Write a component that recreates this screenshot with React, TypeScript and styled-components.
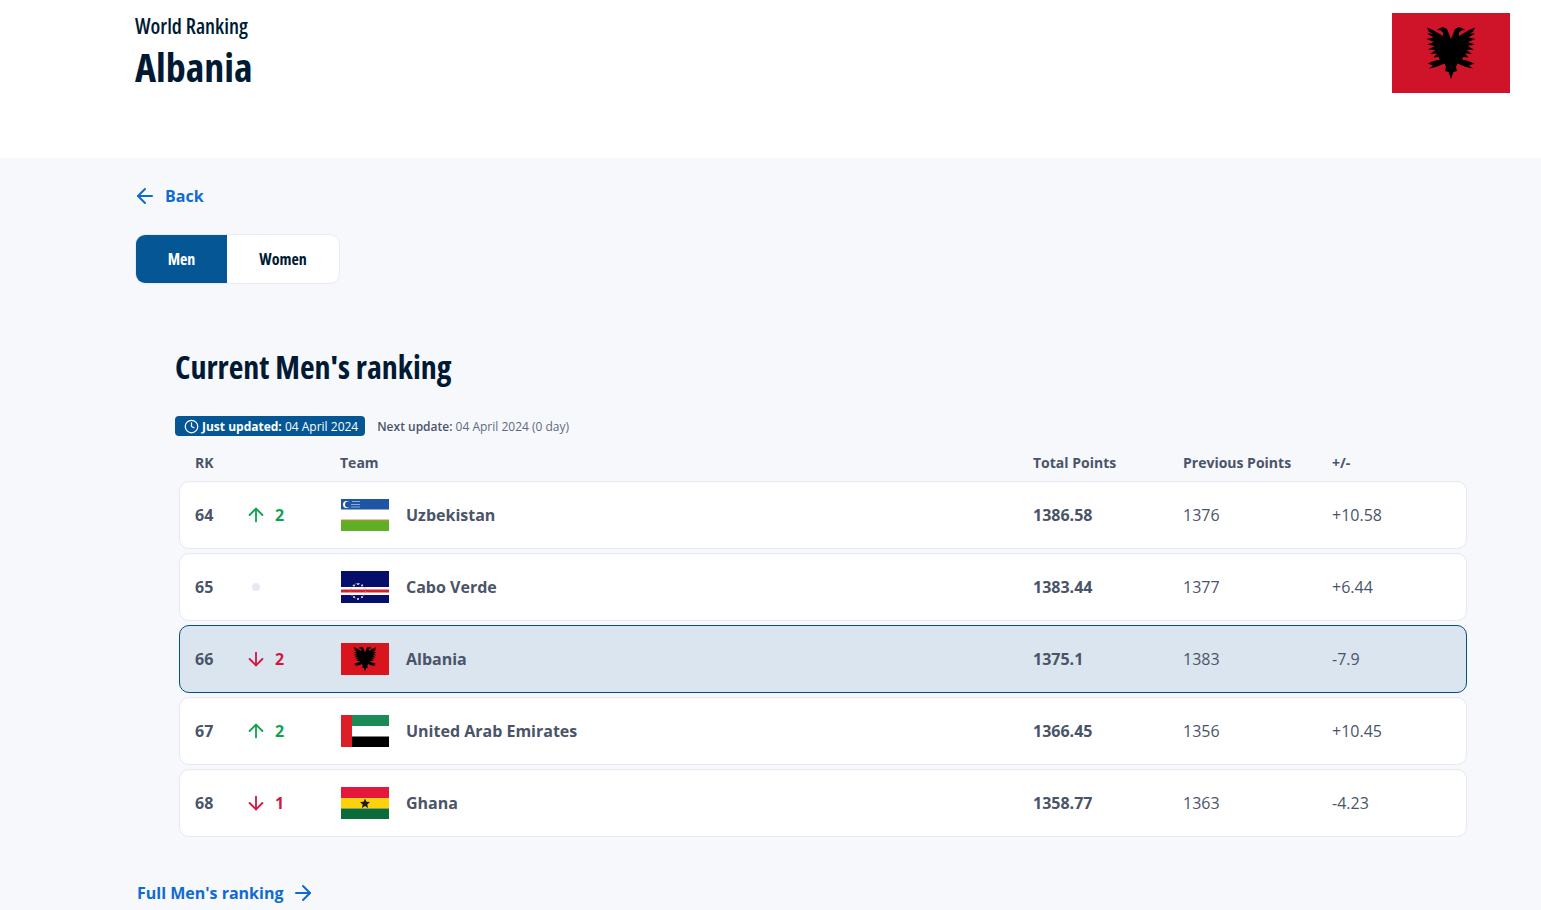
import React from "react";
import styled, { createGlobalStyle } from "styled-components";
import { ArrowDown, ArrowLeft, ArrowRight, ArrowUp, Clock } from "lucide-react";

const GlobalStyle = createGlobalStyle`
  html, body {
    margin: 0;
    padding: 0;
    background: #f7f8fc;
    font-family: "Open Sans", "Liberation Sans", sans-serif;
    overflow: hidden;
  }
`;

const Page = styled.div`
  width: 1541px;
  height: 910px;
  overflow: hidden;
`;

const Hero = styled.header`
  height: 158px;
  box-sizing: border-box;
  background: #fff;
  padding: 13px 31px 0 135px;
  display: flex;
  justify-content: space-between;
  align-items: flex-start;
`;

const HeroText = styled.div`
  display: flex;
  flex-direction: column;
  color: #001a33;
  font-stretch: 75%;
`;

const Eyebrow = styled.span`
  font-size: 21px;
  line-height: 27px;
  font-weight: 600;
`;

const CountryName = styled.h1`
  margin: 0;
  font-size: 40px;
  line-height: 54px;
  font-weight: 700;
`;

const HeroFlag = styled.svg`
  width: 118px;
  height: 80px;
  display: block;
`;

const Main = styled.main`
  padding: 27px 74px 0 135px;
`;

const TextLink = styled.a`
  display: inline-flex;
  align-items: center;
  gap: 8px;
  height: 22px;
  color: #0f6bcf;
  font-size: 16px;
  font-weight: 700;
`;

const BackIcon = styled(ArrowLeft)`
  margin-left: -2px;
`;

const Toggle = styled.div`
  display: flex;
  width: 205px;
  height: 50px;
  box-sizing: border-box;
  margin-top: 21px;
  background: #fff;
  border: 1px solid #e8ebf2;
  border-radius: 10px;
  overflow: hidden;
`;

const ToggleItem = styled.div<{ $active?: boolean }>`
  display: flex;
  align-items: center;
  justify-content: center;
  width: ${(p) => (p.$active ? "91px" : "112px")};
  background: ${(p) => (p.$active ? "#045694" : "transparent")};
  color: ${(p) => (p.$active ? "#fff" : "#001a33")};
  font-size: 16px;
  font-weight: 700;
  font-stretch: 75%;
`;

const Section = styled.section`
  padding-left: 40px;
  margin-top: 59px;
`;

const SectionTitle = styled.h2`
  margin: 0;
  color: #001a33;
  font-size: 32px;
  line-height: 48px;
  font-weight: 700;
  font-stretch: 75%;
`;

const UpdateLine = styled.div`
  display: flex;
  align-items: center;
  gap: 12px;
  margin-top: 25px;
  font-size: 12px;
  color: #5f6980;
`;

const UpdateBadge = styled.span`
  display: inline-flex;
  align-items: center;
  gap: 3px;
  height: 20px;
  padding: 0 7px 0 9px;
  border-radius: 4px;
  background: #045694;
  color: #fff;
  b {
    font-weight: 700;
  }
`;

const NextUpdate = styled.span`
  b {
    font-weight: 600;
    color: #4a5468;
  }
`;

const columns = "52px 93px 693px 150px 149px 1fr";

const HeadRow = styled.div`
  display: grid;
  grid-template-columns: ${columns};
  align-items: center;
  height: 26px;
  margin: 13px 0 6px 0;
  padding-left: 20px;
  color: #4a5468;
  font-size: 14px;
  font-weight: 700;
`;

const Rows = styled.div`
  display: flex;
  flex-direction: column;
  gap: 4px;
  margin-left: 4px;
`;

const Row = styled.div<{ $current?: boolean }>`
  display: grid;
  grid-template-columns: ${columns};
  align-items: center;
  height: 68px;
  box-sizing: border-box;
  padding-left: 15px;
  background: ${(p) => (p.$current ? "#dae5ef" : "#fff")};
  border: 1px solid ${(p) => (p.$current ? "#04507f" : "#e6e9f2")};
  border-radius: 10px;
  color: #4a5468;
  font-size: 16px;
`;

const Rank = styled.span`
  font-weight: 700;
`;

const Move = styled.span<{ $dir: "up" | "down" }>`
  display: flex;
  align-items: center;
  gap: 8px;
  color: ${(p) => (p.$dir === "up" ? "#0fa24f" : "#d5173f")};
  font-weight: 700;
  svg {
    margin-left: -2px;
  }
`;

const SameDot = styled.span`
  display: block;
  width: 8px;
  height: 8px;
  margin-left: 5px;
  border-radius: 50%;
  background: #e6e9f2;
`;

const Team = styled.span`
  display: flex;
  align-items: center;
  gap: 17px;
  padding-left: 1px;
  font-weight: 700;
`;

const RowFlag = styled.svg`
  width: 48px;
  height: 32px;
  display: block;
  flex-shrink: 0;
`;

const Total = styled.span`
  font-weight: 700;
`;

const Footer = styled.div`
  margin: 45px 0 0 2px;
`;

const eagleHalf =
  "M0 -14 L-2 -19 L-4 -24 L-8 -26 L-12 -24.5 L-14 -23 L-10 -22.5 L-8 -20 L-8 -17 L-13 -20 L-18 -23 L-24 -25.5 L-22 -21 L-18 -19.5 L-24 -19.5 L-17.5 -15.5 L-24.5 -14 L-17 -11 L-24 -8.5 L-16.5 -7 L-23 -3.5 L-15.5 -3 L-21 1 L-14 .5 L-17.5 4.5 L-12 4 L-11.5 7 L-16 7.5 L-23.5 10.5 L-18 12.5 L-22 15.5 L-15 14 L-10 12 L-6.5 10.5 L-5 14 L-6 18 L-2.5 19 L0 26 Z";

const Eagle = ({ cx, cy, s }: { cx: number; cy: number; s: number }) => (
  <g transform={`translate(${cx} ${cy}) scale(${s})`} fill="#000">
    <path d={eagleHalf} />
    <path d={eagleHalf} transform="scale(-1 1)" />
  </g>
);

const UzbekistanFlag = () => (
  <>
    <rect width="48" height="32" fill="#fff" />
    <rect width="48" height="10.5" fill="#1f55a5" />
    <rect y="21" width="48" height="11" fill="#5fae24" />
    <rect y="20.5" width="48" height="1" fill="#c88a4a" />
    <circle cx="5.5" cy="5.5" r="3.5" fill="#fff" />
    <circle cx="7" cy="5.5" r="3" fill="#1f55a5" />
    <path d="M11 2.5h8M10 5.5h9M10 8h9" stroke="#a9c1e2" strokeWidth="0.8" />
  </>
);

const CaboVerdeFlag = () => (
  <>
    <rect width="48" height="32" fill="#050f6b" />
    <rect y="16" width="48" height="8" fill="#fff" />
    <rect y="18.5" width="48" height="3" fill="#d6202c" />
    <circle cx="17" cy="20" r="7.5" fill="none" stroke="#e0a63c" strokeWidth="1" strokeDasharray="1.2 2.4" />
    {[[13, 14.5], [17, 13], [21, 14.5], [13, 26], [17, 28], [21, 26]].map(([x, y]) => (
      <circle key={`${x}-${y}`} cx={x} cy={y} r="1" fill="#d9dbe8" />
    ))}
  </>
);

const UaeFlag = () => (
  <>
    <rect width="48" height="11" fill="#1c8a57" />
    <rect y="11" width="48" height="10.5" fill="#fff" />
    <rect y="21.5" width="48" height="10.5" fill="#000" />
    <rect width="11" height="32" fill="#dc1f26" />
  </>
);

const GhanaFlag = () => (
  <>
    <rect width="48" height="11" fill="#e3183a" />
    <rect y="11" width="48" height="10.5" fill="#fcd20f" />
    <rect y="21.5" width="48" height="10.5" fill="#0b6b3a" />
    <path d="M24 11.5l1.4 3.3 3.6.3-2.7 2.3.8 3.5-3.1-1.9-3.1 1.9.8-3.5-2.7-2.3 3.6-.3z" fill="#1f1a17" />
  </>
);

const flags: Record<string, React.ReactNode> = {
  Uzbekistan: <UzbekistanFlag />,
  "Cabo Verde": <CaboVerdeFlag />,
  Albania: (
    <>
      <rect width="48" height="32" fill="#d8141e" />
      <Eagle cx={24} cy={16} s={0.47} />
    </>
  ),
  "United Arab Emirates": <UaeFlag />,
  Ghana: <GhanaFlag />,
};

type RankRow = {
  rank: number;
  dir?: "up" | "down";
  delta?: number;
  team: string;
  total: string;
  previous: string;
  diff: string;
};

const rows: RankRow[] = [
  { rank: 64, dir: "up", delta: 2, team: "Uzbekistan", total: "1386.58", previous: "1376", diff: "+10.58" },
  { rank: 65, team: "Cabo Verde", total: "1383.44", previous: "1377", diff: "+6.44" },
  { rank: 66, dir: "down", delta: 2, team: "Albania", total: "1375.1", previous: "1383", diff: "-7.9" },
  { rank: 67, dir: "up", delta: 2, team: "United Arab Emirates", total: "1366.45", previous: "1356", diff: "+10.45" },
  { rank: 68, dir: "down", delta: 1, team: "Ghana", total: "1358.77", previous: "1363", diff: "-4.23" },
];

export default function App() {
  return (
    <Page>
      <GlobalStyle />
      <Hero>
        <HeroText>
          <Eyebrow>World Ranking</Eyebrow>
          <CountryName>Albania</CountryName>
        </HeroText>
        <HeroFlag viewBox="0 0 118 80">
          <rect width="118" height="80" fill="#cf1429" />
          <Eagle cx={59} cy={40} s={1} />
        </HeroFlag>
      </Hero>
      <Main>
        <TextLink>
          <BackIcon size={24} strokeWidth={2} />
          Back
        </TextLink>
        <Toggle>
          <ToggleItem $active>Men</ToggleItem>
          <ToggleItem>Women</ToggleItem>
        </Toggle>
        <Section>
          <SectionTitle>Current Men's ranking</SectionTitle>
          <UpdateLine>
            <UpdateBadge>
              <Clock size={15} strokeWidth={2} />
              <span>
                <b>Just updated:</b> 04 April 2024
              </span>
            </UpdateBadge>
            <NextUpdate>
              <b>Next update:</b> 04 April 2024 (0 day)
            </NextUpdate>
          </UpdateLine>
          <HeadRow>
            <span>RK</span>
            <span />
            <span>Team</span>
            <span>Total Points</span>
            <span>Previous Points</span>
            <span>+/-</span>
          </HeadRow>
          <Rows>
            {rows.map((r) => (
              <Row key={r.rank} $current={r.team === "Albania"}>
                <Rank>{r.rank}</Rank>
                {r.dir ? (
                  <Move $dir={r.dir}>
                    {r.dir === "up" ? <ArrowUp size={22} /> : <ArrowDown size={22} />}
                    {r.delta}
                  </Move>
                ) : (
                  <span>
                    <SameDot />
                  </span>
                )}
                <Team>
                  <RowFlag viewBox="0 0 48 32">{flags[r.team]}</RowFlag>
                  {r.team}
                </Team>
                <Total>{r.total}</Total>
                <span>{r.previous}</span>
                <span>{r.diff}</span>
              </Row>
            ))}
          </Rows>
        </Section>
        <Footer>
          <TextLink>
            Full Men's ranking
            <ArrowRight size={24} strokeWidth={2} />
          </TextLink>
        </Footer>
      </Main>
    </Page>
  );
}
